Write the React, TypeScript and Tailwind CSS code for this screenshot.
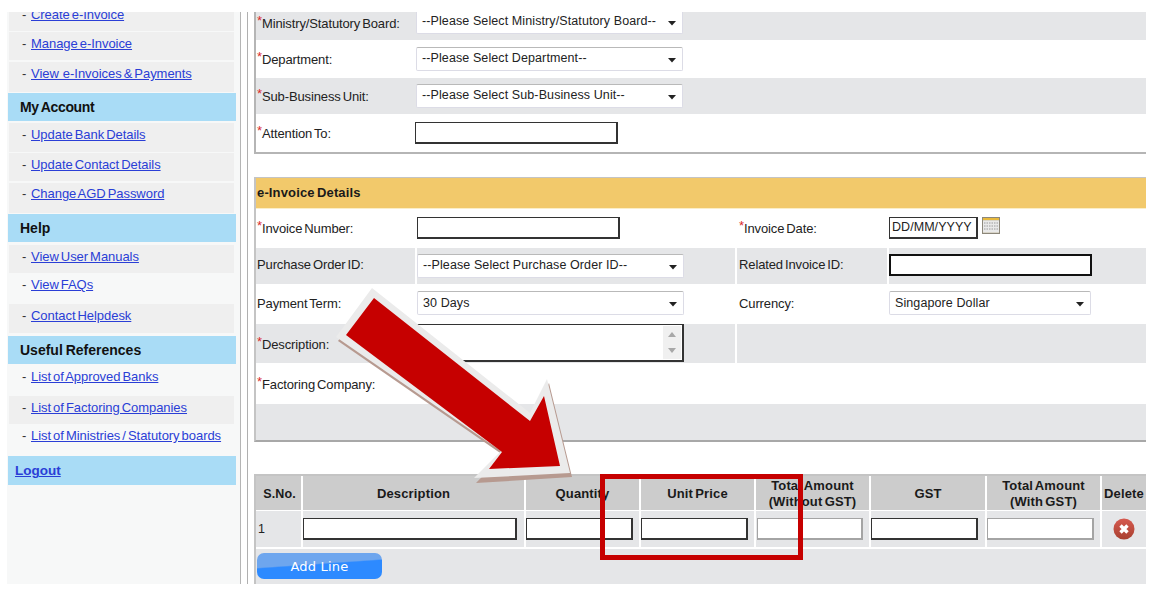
import React from "react";

const Star = () => <span className="relative top-[-3px] text-[#d92b2b]">*</span>;

const Caret = () => (
  <svg width="8" height="5" viewBox="0 0 8 5" className="absolute right-[6px] top-[50%] mt-[-1px]">
    <path d="M0 0H8L4 4.5Z" fill="#222" />
  </svg>
);

function Select({ text, w = "w-[267px]", cls = "", lead = "leading-[20px]" }: { text: string; w?: string; cls?: string; lead?: string }) {
  return (
    <div
      className={`relative ${w} h-[24px] ${cls} ${lead} bg-white rounded-[2px] border border-[#dcdce6] border-t-[#b9b9b9] pl-[5px] text-[12.5px] tracking-[0.1px] text-[#222]`}
    >
      {text}
      <Caret />
    </div>
  );
}

const TextBox = ({ w, thick = false, gray = false, cls = "" }: { w: string; thick?: boolean; gray?: boolean; cls?: string }) => (
  <input
    className={`${w} ${cls} h-[22px] bg-white ${thick ? "border-2 border-[#111]" : gray ? "border border-[#a4a4a4] border-r-2 border-b-2" : "border border-[#333] border-r-2 border-b-2"}`}
  />
);

function NavLink({ text, bg, h, pt = "pt-[2px]" }: { text: string; bg: boolean; h: string; pt?: string }) {
  return (
    <div className={`${h} ${pt} mx-[2px] w-[225px] flex items-start pl-[13px] ${bg ? "bg-[#efefef]" : ""}`}>
      <span className="w-[9px] text-[#333]">-</span>
      <a href="#" className="text-[#2a3ed6] underline whitespace-pre tracking-[-0.05px] [word-spacing:-1.5px]">
        {text}
      </a>
    </div>
  );
}

const Section = ({ text, h, mt = "mt-[1px]", cls = "" }: { text: string; h: string; mt?: string; cls?: string }) => (
  <div className={`${h} ${mt} ${cls} w-[228px] ml-[1px] bg-[#a9dcf6] flex items-center pl-[12px] font-bold text-[14px] [word-spacing:-1px] text-[#111]`}>
    {text}
  </div>
);

const Label = ({ star, text, cls = "" }: { star?: boolean; text: string; cls?: string }) => (
  <span className={`pl-[1px] text-[13px] tracking-[-0.12px] [word-spacing:-1.5px] text-[#222] whitespace-nowrap ${cls}`}>
    {star && <Star />}
    {text}
  </span>
);

const Cell = ({ gray, children, className = "" }: { gray?: boolean; children?: React.ReactNode; className?: string }) => (
  <div className={`flex items-center ${gray ? "bg-[#e5e6e8]" : "bg-white"} ${className}`}>{children}</div>
);

const Head = ({ children, cls = "text-[13px]" }: { children: React.ReactNode; cls?: string }) => (
  <div className={`${cls} bg-[#cccccc] flex items-center justify-center pt-[2px] text-center font-bold leading-[16px] tracking-[0.15px] [word-spacing:-1.5px] text-[#1a1a1a]`}>
    {children}
  </div>
);

const Td = ({ children, cls = "" }: { children?: React.ReactNode; cls?: string }) => (
  <div className={`bg-[#e5e6e8] pt-[7px] ${cls}`}>{children}</div>
);

export default function App() {
  return (
    <div className="relative w-[1171px] h-[603px] bg-white overflow-hidden font-['Liberation_Sans',Arial,sans-serif] text-[13px]">
      <div className="flex pt-[12px] pl-[7px] h-[584px]">
        {/* Sidebar */}
        <aside className="w-[234px] h-[572px] bg-[#f7f8f8] border-r border-[#b5b5b5] overflow-hidden">
          <div className="mt-[-9px]">
            <NavLink text="Create e-Invoice" bg h="h-[28px]" />
            <div className="h-[1px]" />
            <NavLink text="Manage e-Invoice" bg h="h-[28px]" />
            <div className="h-[2px]" />
            <NavLink text="View  e-Invoices & Payments" bg h="h-[30px]" />
            <Section text="My Account" h="h-[28px]" cls="tracking-[-0.35px]" />
            <div className="h-[2px]" />
            <NavLink text="Update Bank Details" bg h="h-[29px]" />
            <div className="h-[1px]" />
            <NavLink text="Update Contact Details" bg h="h-[28px]" />
            <div className="h-[2px]" />
            <NavLink text="Change AGD Password" bg h="h-[30px]" pt="pt-[1px]" />
            <Section text="Help" h="h-[28px]" />
            <div className="h-[3px]" />
            <NavLink text="View User Manuals" bg h="h-[28px]" />
            <NavLink text="View FAQs" bg={false} h="h-[31px]" />
            <NavLink text="Contact Helpdesk" bg h="h-[29px]" />
            <Section text="Useful References" h="h-[28px]" mt="mt-[3px]" />
            <NavLink text="List of Approved Banks" bg={false} h="h-[32px]" pt="pt-[3px]" />
            <NavLink text="List of Factoring Companies" bg h="h-[28px]" />
            <NavLink text="List of Ministries / Statutory boards" bg={false} h="h-[32px]" />
            <div className="h-[29px] w-[228px] ml-[1px] bg-[#a9dcf6] flex items-center pl-[7px] pt-[2px]">
              <a href="#" className="font-bold text-[13.5px] text-[#2a3ed6] underline">Logout</a>
            </div>
          </div>
        </aside>

        <div className="w-[6px]" />
        <div className="w-[1px] h-[572px] bg-[#b0b0b0]" />
        <div className="w-[6px]" />

        {/* Main */}
        <main className="w-[892px] h-[572px] overflow-hidden">
          {/* Panel 1 */}
          <section className="border-l-2 border-b-2 border-[#b5b5b5]">
            <div className="h-[28px] bg-[#e5e6e8] flex items-center overflow-hidden">
              <div className="w-[160px] mt-[-4px]"><Label star text="Ministry/Statutory Board:" /></div>
              <div className="mt-[-8px]"><Select text="--Please Select Ministry/Statutory Board--" /></div>
            </div>
            <div className="h-[38px] bg-white flex items-center">
              <div className="w-[160px] mt-[2px]"><Label star text="Department:" /></div>
              <Select text="--Please Select Department--" />
            </div>
            <div className="h-[36px] bg-[#e5e6e8] flex items-center">
              <div className="w-[160px] mt-[2px]"><Label star text="Sub-Business Unit:" /></div>
              <Select text="--Please Select Sub-Business Unit--" />
            </div>
            <div className="h-[38px] bg-white flex items-center">
              <div className="w-[159px] mt-[2px]"><Label star text="Attention To:" /></div>
              <TextBox w="w-[203px]" />
            </div>
          </section>

          {/* Panel 2 */}
          <section className="mt-[23px] border-l-2 border-t border-b-2 border-[#c4c4c4] border-b-[#a8a8a8]">
            <div className="h-[31px] bg-[#f2c96b] border-b border-[#fbeec8] flex items-center pl-[1px] font-bold text-[13px] tracking-[0.15px] [word-spacing:-1.5px] text-[#1a1a1a]">
              e-Invoice Details
            </div>
            <div className="grid grid-cols-[159px_318px_150px_1fr] gap-x-[2px] gap-y-[1px] grid-rows-[38px_36px_38px_39px_39px_36px]">
              <Cell><Label star text="Invoice Number:" cls="mt-[2px]" /></Cell>
              <Cell><TextBox w="w-[203px]" /></Cell>
              <Cell><Label star text="Invoice Date:" cls="pl-[2px] mt-[2px]" /></Cell>
              <Cell>
                <div className="flex items-start gap-[4px]">
                  <div className="w-[89px] h-[22px] border border-[#333] border-b-2 border-r-2 pl-[2px] leading-[19px] text-[12.5px] tracking-[0.05px] text-[#222] whitespace-nowrap overflow-hidden">DD/MM/YYYY</div>
                  <svg width="18" height="17" viewBox="0 0 18 17">
                    <rect x="0" y="0" width="18" height="17" fill="#d8d4c8" />
                    <rect x="0" y="0" width="18" height="3" fill="#e8b93c" />
                    <rect x="1" y="4" width="16" height="11" fill="#e9e9e9" />
                    <path d="M2 6h14M2 9h14M2 12h14" stroke="#9a9a9a" strokeDasharray="1.5 1" />
                    <rect x="0.5" y="0.5" width="17" height="16" fill="none" stroke="#8c877a" />
                  </svg>
                </div>
              </Cell>

              <Cell gray><Label text="Purchase Order ID:" cls="mt-[-2px]" /></Cell>
              <Cell gray><Select text="--Please Select Purchase Order ID--" /></Cell>
              <Cell gray><Label text="Related Invoice ID:" cls="pl-[2px] mt-[-2px]" /></Cell>
              <Cell gray><TextBox w="w-[203px]" thick cls="mt-[-2px]" /></Cell>

              <Cell><Label text="Payment Term:" /></Cell>
              <Cell><Select text="30 Days" cls="mt-[-2px]" lead="leading-[22px]" /></Cell>
              <Cell><Label text="Currency:" cls="pl-[2px]" /></Cell>
              <Cell><Select text="Singapore Dollar" w="w-[202px]" cls="mt-[-2px]" lead="leading-[22px]" /></Cell>

              <Cell gray><Label star text="Description:" cls="mt-[2px]" /></Cell>
              <Cell gray>
                <div className="relative w-[267px] h-[38px] mt-[-2px] bg-white border border-[#333] border-b-2 border-r-2">
                  <div className="absolute right-[1px] top-[1px] bottom-[1px] w-[18px] bg-[#f0f0f0] flex flex-col items-center justify-between py-[6px]">
                    <svg width="8" height="5" viewBox="0 0 8 5"><path d="M0 5H8L4 0Z" fill="#a8a8a8" /></svg>
                    <svg width="8" height="5" viewBox="0 0 8 5"><path d="M0 0H8L4 5Z" fill="#a8a8a8" /></svg>
                  </div>
                </div>
              </Cell>
              <Cell gray className="col-span-2" />

              <Cell className="col-span-4"><Label star text="Factoring Company:" cls="mt-[2px]" /></Cell>
              <Cell gray className="col-span-4" />
            </div>
          </section>

          {/* Panel 3 */}
          <section className="mt-[32px] border-l-2 border-t-2 border-[#c4c4c4] bg-white">
            <div className="grid grid-cols-[45px_221px_113px_113px_113px_114px_113px_44px] gap-x-[2px] gap-y-[1px] grid-rows-[34px_36px]">
              <Head cls="text-[12.5px] pl-[2px]">S.No.</Head>
              <Head>Description</Head>
              <Head>Quantity</Head>
              <Head>Unit Price</Head>
              <Head><span>Total Amount<br />(Without GST)</span></Head>
              <Head>GST</Head>
              <Head><span>Total Amount<br />(With GST)</span></Head>
              <Head>Delete</Head>

              <div className="bg-[#e5e6e8] flex items-center pl-[2px] text-[12.5px] text-[#222]">1</div>
              <Td><TextBox w="w-[214px]" /></Td>
              <Td><TextBox w="w-[107px]" /></Td>
              <Td><TextBox w="w-[107px]" /></Td>
              <Td cls="pl-[1px]"><TextBox w="w-[106px]" gray /></Td>
              <Td><TextBox w="w-[107px]" /></Td>
              <Td><TextBox w="w-[107px]" gray /></Td>
              <div className="bg-[#e5e6e8] flex items-center justify-center">
                <svg width="22" height="22" viewBox="0 0 22 22">
                  <defs>
                    <linearGradient id="del" x1="0" y1="0" x2="0" y2="1">
                      <stop offset="0" stopColor="#d65a50" />
                      <stop offset="1" stopColor="#a84030" />
                    </linearGradient>
                  </defs>
                  <circle cx="11" cy="11" r="10.5" fill="url(#del)" />
                  <path d="M7.5 7.5L14.5 14.5M14.5 7.5L7.5 14.5" stroke="#fff" strokeWidth="3.4" />
                </svg>
              </div>
            </div>
            <div className="mt-[2px] h-[35px] bg-[#e5e6e8] pt-[4px] pl-[1px]">
              <button className="w-[125px] h-[26px] pt-[1px] rounded-[7px] bg-[linear-gradient(176deg,#6ea6ee_42%,#2d8aff_46%)] text-white text-[13px] font-['DejaVu_Sans',sans-serif] tracking-[0.2px]">
                Add Line
              </button>
            </div>
          </section>
        </main>
      </div>

      {/* Annotation: arrow */}
      <svg className="absolute left-0 top-0 pointer-events-none" width="1171" height="603" viewBox="0 0 1171 603">
        <polygon points="374,292 338,341 503,455 476,483 572,477 549,383 532,417" fill="#b79a90" />
        <polygon points="372,288 336,337 501,451 474,478 570,473 547,379 530,413" fill="#ebebeb" />
        <polygon points="374,298 346,335 502,452 489,469 560,466 544,396 530,421" fill="#c60000" />
      </svg>

      {/* Annotation: highlight box */}
      <div className="absolute left-[600px] top-[474px] w-[203px] h-[86px] border-[5px] border-[#c60000]" />
    </div>
  );
}
